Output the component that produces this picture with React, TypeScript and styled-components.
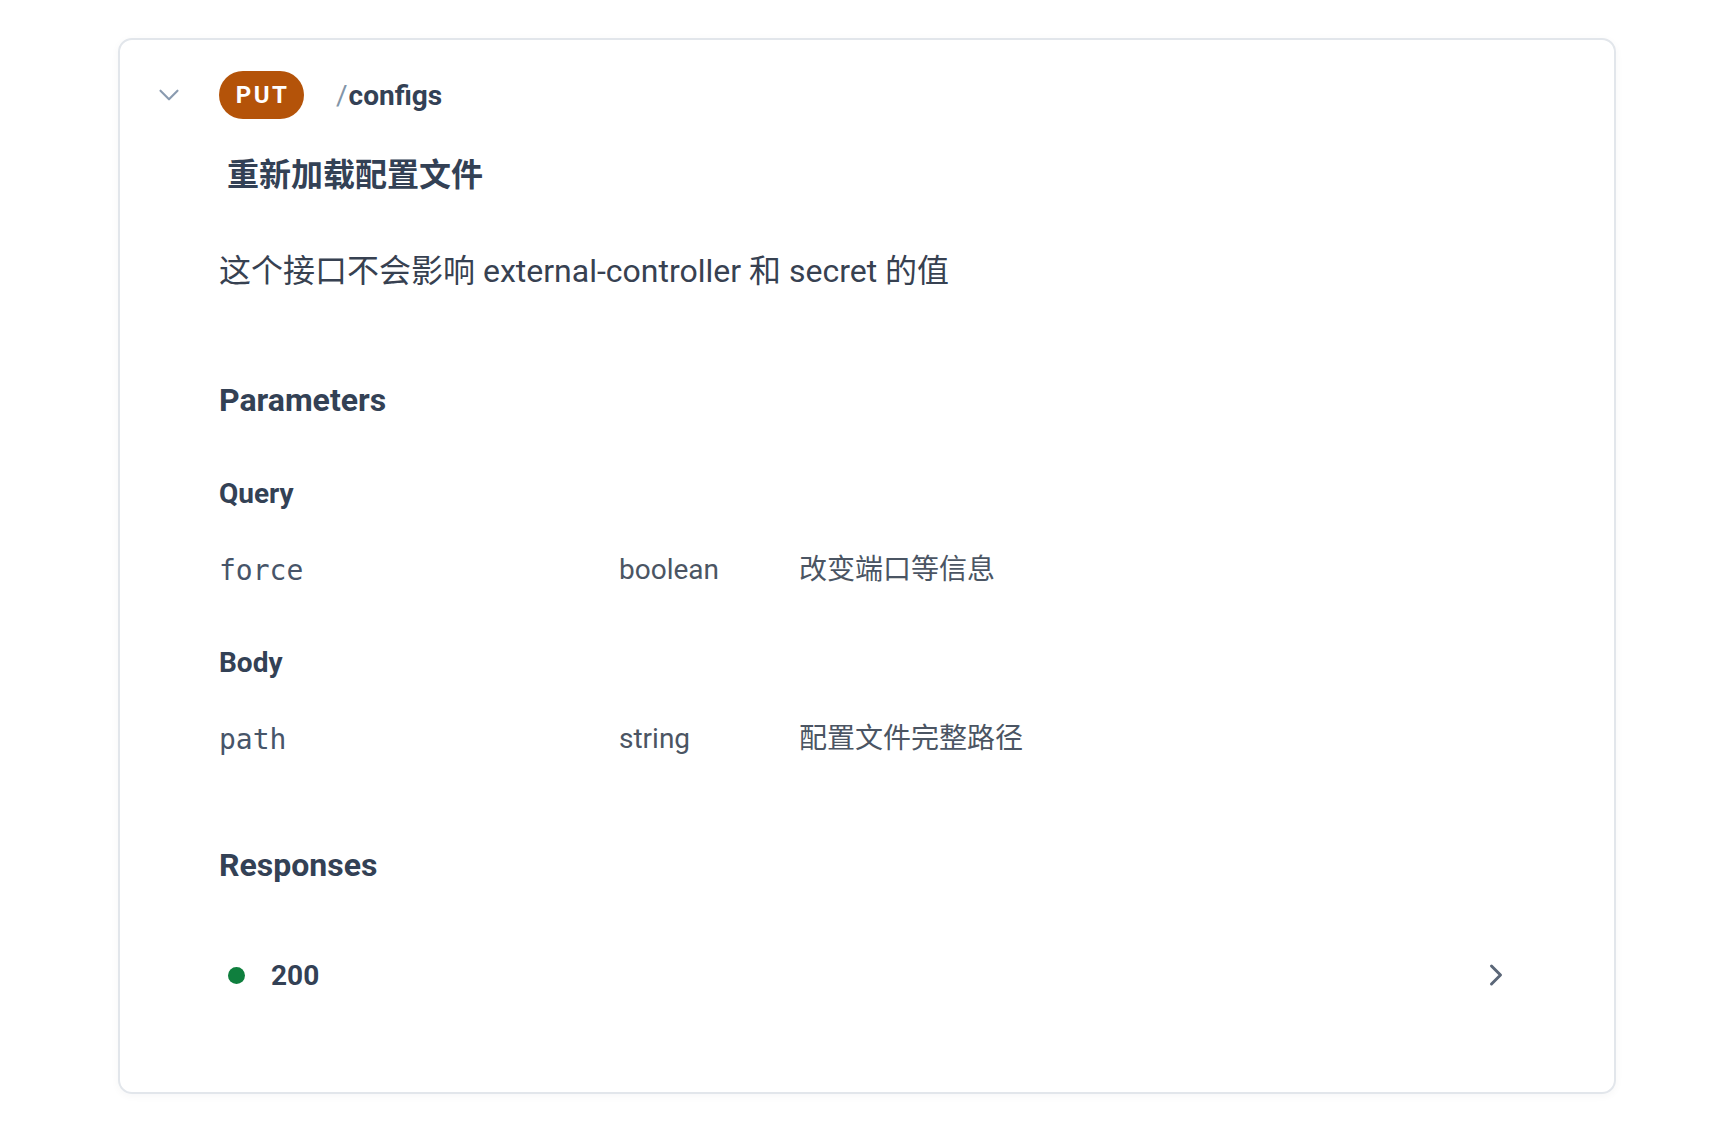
import React from "react";
import styled, { createGlobalStyle } from "styled-components";
import { ChevronDown, ChevronRight } from "lucide-react";

import type { FC } from "react";

const GlobalStyle = createGlobalStyle`
  html, body {
    margin: 0;
    background: #ffffff;
    font-family: Roboto, "Noto Sans CJK SC", sans-serif;
    color: #334155;
  }
`;

const Page = styled.div`
  padding: 38px 120px 40px 118px;
`;

const Card = styled.section`
  border: 2px solid #e2e6eb;
  border-radius: 14px;
  box-shadow: 0 2px 8px rgba(15, 23, 42, 0.04);
  padding: 31px 100px 97px 32px;
  height: 1056px;
  box-sizing: border-box;
`;

const Header = styled.div`
  display: flex;
  align-items: center;
  height: 48px;
`;

const Toggle = styled.span`
  display: flex;
  align-items: center;
  justify-content: center;
  width: 34px;
  height: 34px;
  margin-right: 33px;
  color: #8a9bb0;
`;

const MethodBadge = styled.span`
  display: inline-flex;
  align-items: center;
  justify-content: center;
  height: 48px;
  width: 85px;
  border-radius: 24px;
  background: #b45309;
  color: #ffffff;
  font-size: 24px;
  font-weight: 700;
  letter-spacing: 2.5px;
  padding-left: 2px;
  box-sizing: border-box;
`;

const Path = styled.span`
  margin-left: 32px;
  font-size: 28px;
  font-weight: 700;
  color: #334155;
`;

const Slash = styled.span`
  color: #8295a8;
  font-weight: 400;
  margin-right: 1px;
`;

const Body = styled.div`
  padding-left: 67px;
`;

const Summary = styled.h2`
  margin: 32px 0 0;
  padding-left: 8px;
  font-size: 32px;
  line-height: 48px;
  font-weight: 700;
  color: #334155;
`;

const Description = styled.p`
  margin: 48px 0 0;
  font-size: 32px;
  line-height: 48px;
  color: #374151;
`;

const SectionTitle = styled.h3<{ $gap: number }>`
  margin: ${(p) => p.$gap}px 0 0;
  font-size: 32px;
  line-height: 48px;
  font-weight: 700;
  color: #334155;
`;

const GroupTitle = styled.h4<{ $gap: number }>`
  margin: ${(p) => p.$gap}px 0 0;
  font-size: 28px;
  line-height: 42px;
  font-weight: 700;
  color: #334155;
`;

const ParamRow = styled.div`
  margin-top: 34px;
  display: grid;
  grid-template-columns: 400px 180px 1fr;
  align-items: center;
  font-size: 28px;
  line-height: 42px;
  color: #4b5563;
`;

const ParamName = styled.code`
  font-family: "DejaVu Sans Mono", monospace;
  font-size: 28px;
  color: #475569;
  position: relative;
  top: 1px;
`;

const ParamType = styled.span`
  color: #4b5563;
`;

const ParamDesc = styled.span`
  color: #4b5563;
`;

const ResponseRow = styled.div`
  margin-top: 65px;
  display: flex;
  align-items: center;
  height: 42px;
  padding-left: 9px;
`;

const StatusDot = styled.span`
  width: 17px;
  height: 17px;
  border-radius: 50%;
  background: #0f7f3e;
  margin-right: 26px;
`;

const StatusCode = styled.span`
  font-size: 28px;
  font-weight: 700;
  color: #334155;
  flex: 1;
`;

const Expand = styled.span`
  display: flex;
  color: #5b6778;
`;

const params = [
  { group: "Query", name: "force", type: "boolean", desc: "改变端口等信息" },
  { group: "Body", name: "path", type: "string", desc: "配置文件完整路径" },
];

const App: FC = () => {
  return (
    <Page>
      <GlobalStyle />
      <Card>
        <Header>
          <Toggle>
            <ChevronDown size={34} strokeWidth={1.5} />
          </Toggle>
          <MethodBadge>PUT</MethodBadge>
          <Path>
            <Slash>/</Slash>configs
          </Path>
        </Header>
        <Body>
          <Summary>重新加载配置文件</Summary>
          <Description>
            这个接口不会影响 external-controller 和 secret 的值
          </Description>
          <SectionTitle $gap={81}>Parameters</SectionTitle>
          {params.map((p, i) => (
            <React.Fragment key={p.name}>
              <GroupTitle $gap={i === 0 ? 49 : 51}>{p.group}</GroupTitle>
              <ParamRow>
                <ParamName>{p.name}</ParamName>
                <ParamType>{p.type}</ParamType>
                <ParamDesc>{p.desc}</ParamDesc>
              </ParamRow>
            </React.Fragment>
          ))}
          <SectionTitle $gap={81}>Responses</SectionTitle>
          <ResponseRow>
            <StatusDot />
            <StatusCode>200</StatusCode>
            <Expand>
              <ChevronRight size={36} strokeWidth={2} />
            </Expand>
          </ResponseRow>
        </Body>
      </Card>
    </Page>
  );
};

export default App;
